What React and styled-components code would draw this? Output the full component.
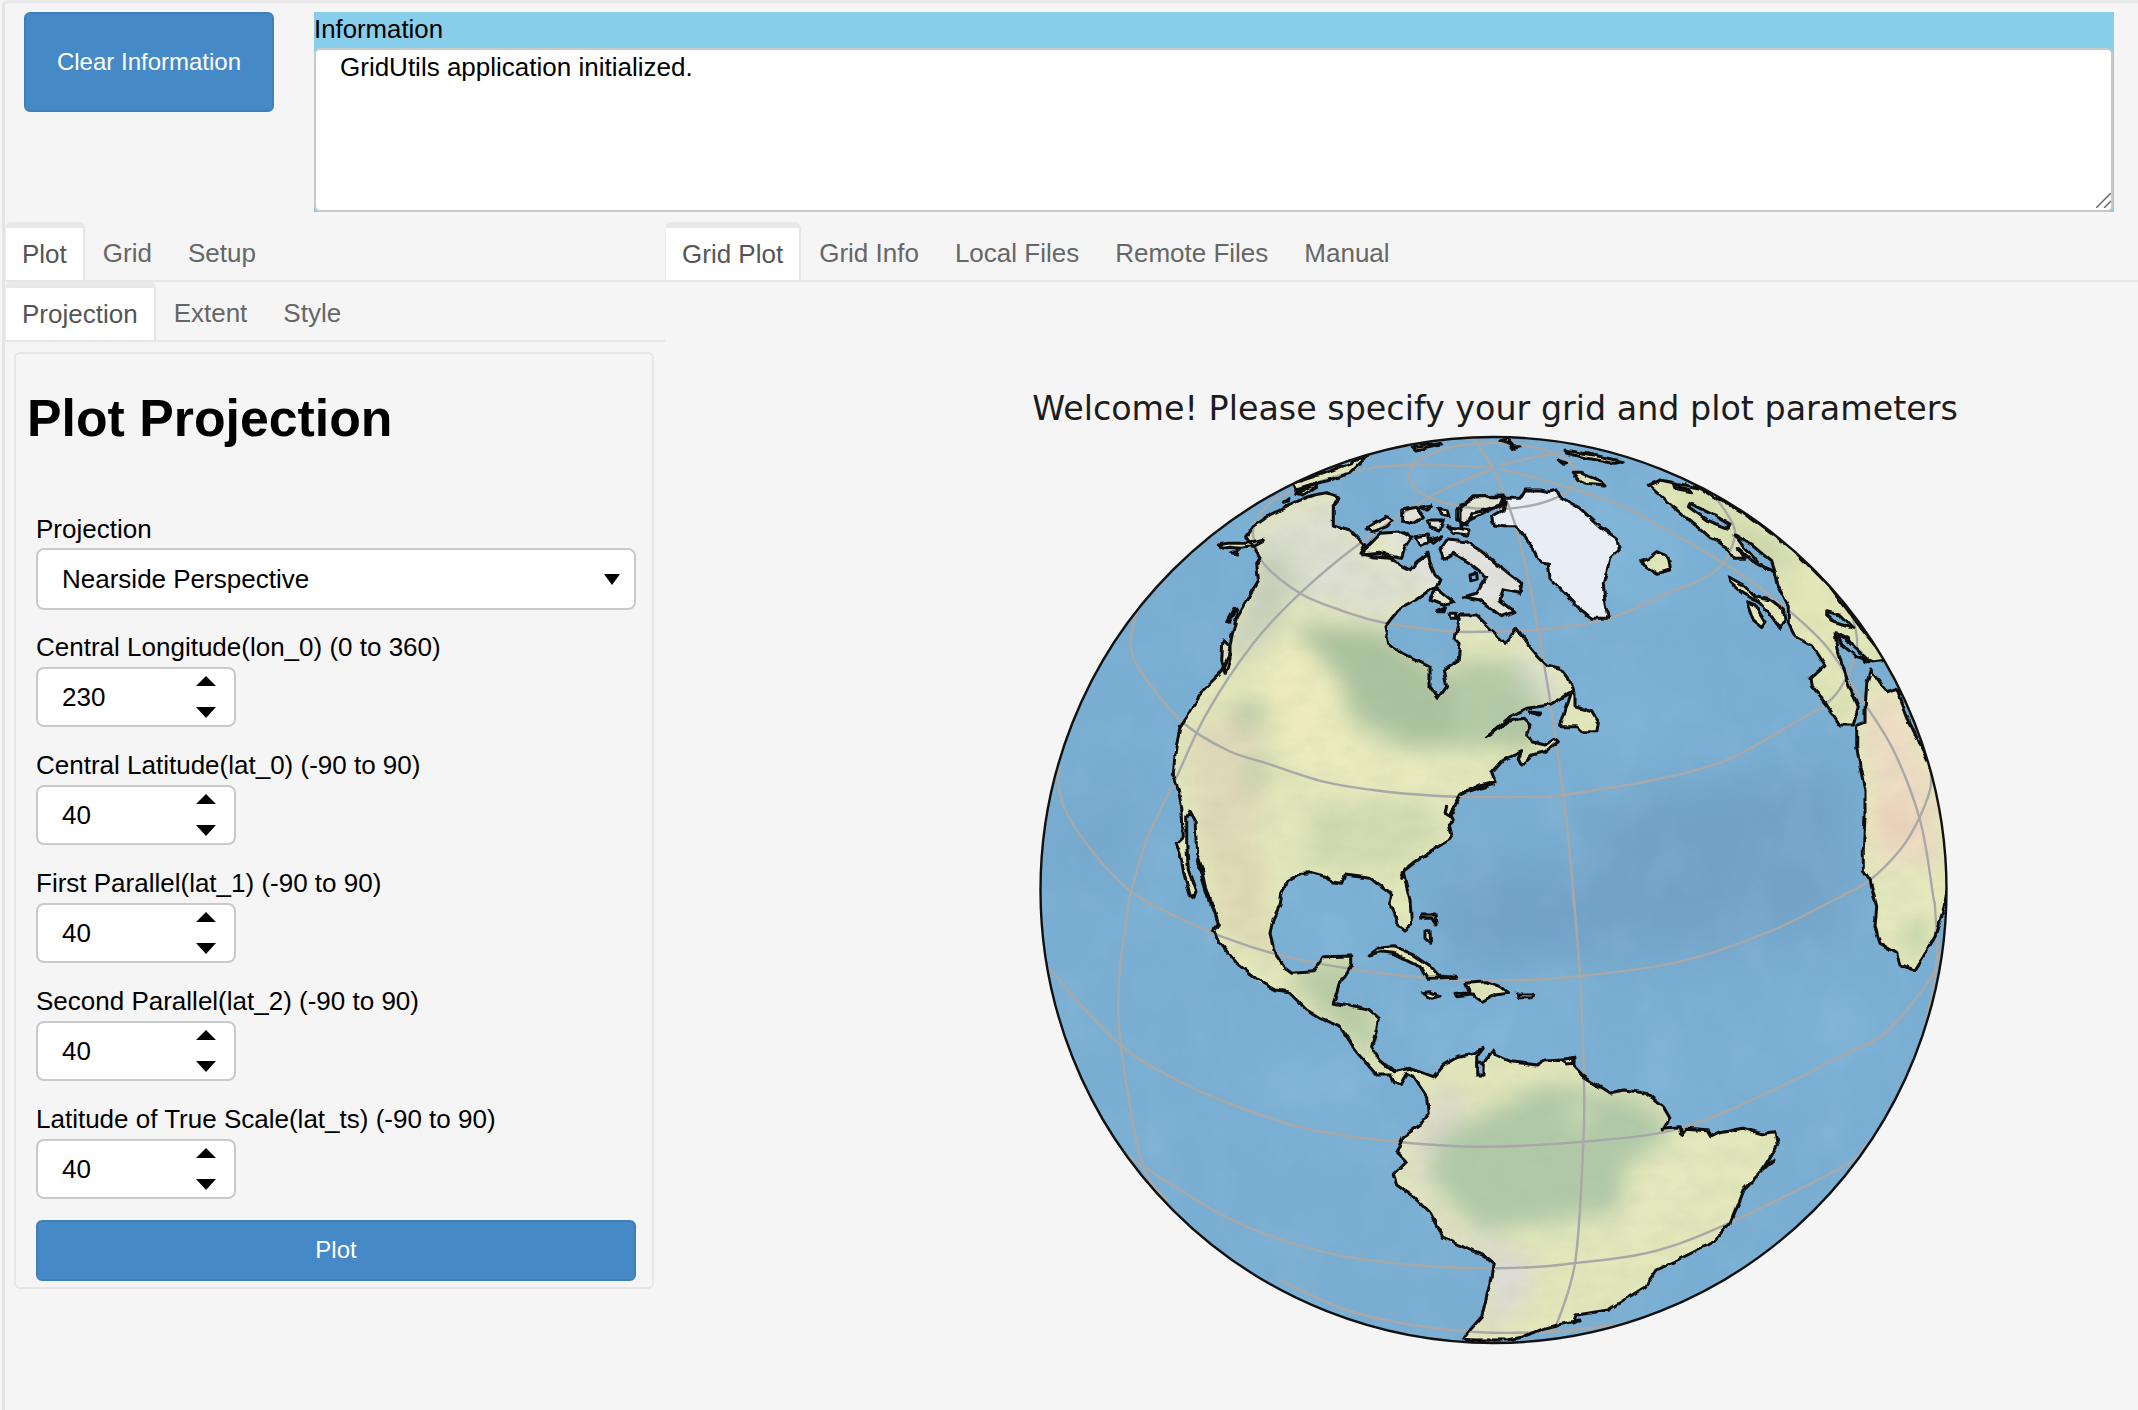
import React from "react";
import styled, { createGlobalStyle } from "styled-components";

const Global = createGlobalStyle`
  html, body { margin: 0; padding: 0; background: #f5f5f5; }
  body { font-family: "Liberation Sans", Arial, sans-serif; color: #000; }
  * { box-sizing: border-box; }
`;

const Frame = styled.div`
  width: 2136px; height: 1410px; margin-left: 2px; overflow: hidden;
  border-left: 3px solid #e4e4e4; border-top: 3px solid #e8e8e8;
  border-top-left-radius: 6px; background: #f5f5f5;
`;
const TopRow = styled.div`
  display: flex; align-items: flex-start; height: 219px; padding: 9px 0 0 19px;
`;
const Button = styled.button`
  display: block; width: ${p => p.$wide ? "600px" : "250px"}; height: ${p => p.$wide ? "61px" : "100px"};
  background: #4589c6; color: #fff; border: 2px solid #3f80bb; border-radius: 6px;
  font: 24px/1 "Liberation Sans", Arial, sans-serif; padding: 0 0 ${p => p.$wide ? "2px" : "0"};
`;
const InfoBox = styled.div`
  position: relative; margin-left: 40px; width: 1800px; height: 200px; background: #87ceeb;
  display: flex; flex-direction: column; padding-right: 1px;
`;
const InfoTitle = styled.div`
  height: 36px; font-size: 25.8px; line-height: 34px; color: #000;
`;
const InfoArea = styled.textarea`
  flex: 1; display: block; width: 100%; margin: 0; padding: 2px 24px; border: 2px solid #c9c9c9; border-radius: 6px;
  background: #fff; font: 26px/30px "Liberation Sans", Arial, sans-serif; color: #000; outline: none; resize: none;
`;
const Grip = styled.svg`
  position: absolute; right: 3px; bottom: 4px; width: 15px; height: 15px; pointer-events: none;
`;
const Columns = styled.div`display: flex; align-items: flex-start;`;
const LeftCol = styled.div`width: 660px; flex: none;`;
const RightCol = styled.div`flex: 1; min-width: 0;`;
const TabBar = styled.div`
  display: flex; height: 60px; border-bottom: 2px solid #e6e6e6; padding: 0;
`;
const Tab = styled.div`
  height: 58px; padding: 4px 17px 0; margin-right: 2px; flex: none;
  font-size: 26px; line-height: 54px; color: ${p => p.$active ? "#555" : "#666"};
  ${p => p.$active ? `
    background: #fff; border-top: 6px solid #e8e8e8; border-left: 1px solid #ececec; border-right: 2px solid #e6e6e6;
    border-radius: 6px 6px 0 0; line-height: 52px; padding-top: 0; padding-left: 16px; padding-right: 16px; margin-right: 1px;
  ` : ""}
`;
const Panel = styled.div`
  margin: 10px 0 0 9px; width: 640px; height: 937px; padding: 36px 18px 0 11px;
  border: 2px solid #e6e6e6; border-radius: 6px; background: #f5f5f5;
`;
const Heading = styled.h1`
  margin: 0 0 69px; font-size: 51.8px; line-height: 56px; font-weight: 700; color: #000;
`;
const Form = styled.div`padding-left: 9px;`;
const Group = styled.div`
  margin-bottom: 24px;
  &:last-of-type { margin-bottom: 21px; }
`;
const Label = styled.div`
  font-size: 26px; line-height: 28px; color: #000; white-space: nowrap;
`;
const SelectBox = styled.div`
  display: flex; align-items: center; justify-content: space-between; width: 600px; height: 62px;
  padding: 0 14px 0 24px; margin-top: 5px; margin-bottom: -1px; background: #fff; border: 2px solid #c9c9c9; border-radius: 8px;
  font-size: 26px;
`;
const NumberBox = styled.div`
  display: flex; align-items: center; justify-content: space-between; width: 200px; height: 60px;
  margin-top: 6px; padding: 0 18px 0 24px; background: #fff; border: 2px solid #c9c9c9; border-radius: 8px;
  font-size: 26px;
`;
const Pane = styled.div`
  padding: 107px 0 0 365px; display: flex; flex-direction: column; align-items: flex-start;
`;
const PlotTitle = styled.div`
  width: 930px; text-align: center; height: 41px;
  font: 33.35px/40px "DejaVu Sans", sans-serif; color: #1c1c1c; white-space: nowrap;
`;
const GlobeSvg = styled.svg`display: block; width: 930px; height: 930px; filter: blur(0.4px);`;

const conv = (ox, oy, k = 3, ky = k) => s =>
  s.trim().split(/\s+/).map(t => { const [x, y] = t.split(",").map(Number); return [ox + x / k, oy + y / ky]; });
const Z6 = conv(1040, 430), Z7 = conv(1460, 430), Z8 = conv(1180, 850), Z9 = conv(1640, 850), G = conv(0, 0, 1);
const poly = pts => "M" + pts.map(p => p[0].toFixed(1) + " " + p[1].toFixed(1)).join("L") + "Z";
const line = pts => "M" + pts.map(p => p[0].toFixed(1) + " " + p[1].toFixed(1)).join("L");
const smooth = pts => {
  let d = `M${pts[0][0].toFixed(1)} ${pts[0][1].toFixed(1)}`;
  for (let i = 0; i < pts.length - 1; i++) {
    const a = pts[Math.max(i - 1, 0)], b = pts[i], c = pts[i + 1], e = pts[Math.min(i + 2, pts.length - 1)];
    d += `C${(b[0] + (c[0] - a[0]) / 6).toFixed(1)} ${(b[1] + (c[1] - a[1]) / 6).toFixed(1)} ${(c[0] - (e[0] - b[0]) / 6).toFixed(1)} ${(c[1] - (e[1] - b[1]) / 6).toFixed(1)} ${c[0].toFixed(1)} ${c[1].toFixed(1)}`;
  }
  return d;
};

const mainland = poly([
  ...Z6("620,320 640,290 680,262 720,240 770,215 820,195 860,188 895,200 880,230 880,285 930,300 955,325 975,345 960,370 1000,380 1050,385 1090,410 1110,420 1130,395 1165,370 1170,400 1185,435 1200,450 1180,475 1130,510 1075,540 1035,590 1045,640 1090,670 1170,710 1170,770 1195,805 1220,770 1210,720 1255,690 1260,640 1245,625 1260,555 1310,555 1365,610 1395,640 1430,595 1470,650"),
  ...Z7("235,680 260,705 300,715 335,760 342,785 330,790 270,825 200,835 150,860 100,905 80,920 105,905 140,875 190,865 210,885 200,910 215,935 255,945 285,925 295,935 255,965 215,975 185,1005 175,985 185,965 130,990 95,1030 105,1055 60,1065 20,1085 0,1095"),
  ...Z6("1245,1120 1230,1150 1240,1170 1225,1185 1235,1225 1170,1265 1120,1300 1095,1320 1085,1345"),
  ...Z8("670,70 690,150 695,225 675,240 650,220 630,160 635,135 590,100 570,85 495,75 485,100 455,95 440,80 395,68 360,70 320,95 305,130 300,165 280,205 270,250 285,310 315,355 335,370 400,365 430,320 515,318 515,345 495,380 480,395 470,430 460,460 520,470 565,480 595,505 590,540 575,590 600,630 640,665 690,655 720,665 760,680 790,645 830,620 880,610 910,595 890,620 890,640 895,670 910,675 912,640 925,620 940,600 945,615 990,635 1070,645 1095,630 1180,625 1185,655 1210,680 1290,730 1330,720 1400,730 1450,770 1470,805 1450,840"),
  ...Z9("70,835 118,830 122,855 135,838 205,842 215,860 240,848 310,835 370,853 405,848 412,885 370,955"),
  ...G("1773,1160 1743,1190 1730,1223 1712,1243 1657,1270 1645,1287 1608,1310 1577,1315 1574,1323"),
  ...Z8("1200,1410 1090,1435 1030,1460 980,1470 890,1470 850,1468 870,1440 905,1400 915,1360 930,1300 940,1240 915,1220 860,1195 790,1165 750,1090 700,1040 650,1005 640,975 680,935 650,905 670,860 720,825 745,790 740,740 700,680 680,670 660,705 640,695 630,675 590,675 550,630 525,600 480,530 420,505 380,480 325,425 285,420 240,395 170,340 120,280 100,240 115,220 85,130 50,30"),
  ...Z6("510,1420 490,1330 470,1270 465,1170 450,1143 440,1160 440,1240 445,1320 468,1385 462,1405 450,1395 430,1320 420,1270 408,1240 430,1220 425,1130 415,1080 400,1035 405,970 420,890 440,860 490,780 540,730 565,680 575,620 590,560 620,510 655,450 650,400 660,385 640,350"),
]);

const greenland = poly([
  ...Z7("130,205 180,205 195,180 240,180 270,185 290,180 300,200 360,235 420,290 470,325 478,360 450,385 430,460 435,520 445,565 395,565 350,530 270,445 265,400 240,395 215,350 170,290 130,290 100,285 95,260 130,240 135,215"),
]);
const africa = poly([
  ...Z7("1190,890 1215,880 1215,840 1220,760 1232,720 1260,760 1280,785 1310,775 1350,880 1430,1050 1470,1300 1470,1430"),
  ...Z9("925,100 912,175 885,260 850,320 825,360 780,345 770,310 720,280 705,230 710,170 690,90 670,60 670,0"),
  ...Z7("1215,1160 1215,1080 1200,1010 1190,950"),
]);
const eurasia = poly(Z7("565,165 600,150 720,175 860,255 1000,360 1110,470 1200,590 1280,690 1240,695 1215,695 1165,625 1125,605 1130,650 1165,760 1195,830 1180,885 1140,885 1100,825 1055,770 1050,745 1095,705 1060,650 1005,620 985,580 985,530 955,470 945,425 880,395 835,355 855,385 820,385 800,350 750,325 700,280 620,215"));

const islands = [
  Z7("805,440 850,465 885,500 930,510 970,540 975,570 960,595 935,560 900,520 850,490 810,455"),
  Z7("860,515 885,525 915,575 905,590 880,570"),
  Z7("540,395 565,385 590,365 625,380 632,420 590,430 565,415"),
  Z7("340,130 365,130 425,155 435,165 375,160 355,150"),
  Z7("315,60 400,75 490,95 460,100 380,85 320,70"),
  Z7("298,90 320,98 310,100"),
  Z7("150,50 180,50 165,55"),
  Z7("335,785 345,790 345,830 395,845 415,880 410,905 365,905 350,890 300,890 320,830"),
  Z7("205,845 245,850 240,858 210,850"),
  Z7("0,225 50,200 130,198 125,225 70,250 30,270 0,290"),
  Z6("975,295 1040,260 1060,270 1040,290 1000,305"),
  Z6("985,345 1020,310 1090,305 1115,320 1095,350 1085,385 1060,380 1020,370 965,375"),
  Z6("1085,240 1130,232 1150,260 1120,280 1085,270"),
  Z6("1140,232 1175,225 1160,240"),
  Z6("1165,270 1210,270 1200,300 1170,290"),
  Z6("1195,235 1225,240 1230,260 1205,255"),
  Z6("1125,320 1165,315 1170,335 1140,350"),
  Z6("1170,330 1205,320 1180,340"),
  Z6("1220,290 1290,300 1285,315 1240,310"),
  Z6("1250,240 1300,200 1390,200 1380,225 1300,250 1280,285 1250,270"),
  Z6("1200,360 1220,330 1280,335 1320,360 1380,410 1445,460 1440,490 1390,480 1380,510 1425,545 1385,560 1320,510 1270,500 1310,490 1340,440 1290,400 1240,370 1210,385"),
  Z6("1170,510 1190,475 1240,515 1210,525"),
  Z6("1190,545 1220,532 1215,545"),
  Z6("1230,550 1250,550 1250,565 1232,565"),
  Z6("550,630 570,650 570,690 555,730 545,690 548,640"),
  Z6("560,575 585,535 590,540 570,572"),
  Z6("535,345 560,340 620,340 670,328 668,335 640,350 600,355 570,352 550,355"),
  Z6("575,368 595,362 590,372"),
  Z6("730,220 750,205 745,215"),
  Z6("770,190 820,165 830,170 790,195"),
  Z6("760,160 850,130 930,100 985,75 930,130 850,155 770,180"),
  Z6("1120,50 1200,38 1205,45 1130,60"),
  Z6("1380,30 1420,45 1400,25"),
  Z8("722,195 765,195 768,225 755,205 722,205"),
  Z8("735,245 750,245 752,280 735,265"),
  Z8("565,315 590,295 640,290 700,315 750,350 775,378 830,382 740,385 720,350 640,310 600,305"),
  Z8("725,428 750,425 780,438 755,445"),
  Z8("825,430 870,430 855,400 920,395 960,410 985,430 940,435 905,455 880,435 830,440"),
  Z8("1012,432 1058,432 1055,443 1015,443"),
  Z8("1145,630 1185,622 1185,640 1160,642"),
].map(poly);

const holes = [
  Z7("690,220 750,250 810,285 805,295 740,270 685,230"),
  Z7("825,315 875,345 935,395 945,425 900,405 870,370 850,350"),
  Z7("1100,545 1140,555 1180,595 1125,578 1100,555"),
  Z7("645,168 690,180 695,188 650,180"),
  Z6("1290,435 1310,430 1312,450 1292,455"),
  Z8("890,640 912,640 912,675 890,675"),
  Z7("1130,610 1170,640 1225,690 1235,695 1190,680 1140,640"),
].map(poly);

const allLand = [mainland, greenland, africa, eurasia, ...islands].join(" ");

const blobs = [
  ["#dddfd2", Z6("640,300 880,190 960,370 1190,450 1030,570 800,510 650,450")],
  ["#e3e3df", Z6("960,230 1500,190 1500,600 1240,560 1100,400")],
  ["#c9d0bc", Z6("650,330 780,400 730,560 600,700 560,650 640,440")],
  ["#abc29f", Z6("760,580 1030,600 1200,730 1500,770 1500,950 1300,950 1100,950 940,870 910,760 820,660")],
  ["#b6caa7", Z7("-20,680 180,700 290,800 200,860 50,950 -20,950")],
  ["#d9decf", Z7("170,640 270,720 335,770 270,810 190,760")],
  ["#ecebbd", Z6("710,630 850,700 900,900 1000,990 1280,1050 1150,1080 800,1030 640,800")],
  ["#e0d9b8", Z6("440,900 640,830 680,1100 600,1300 480,1250")],
  ["#bfcdaa", Z6("600,1040 680,960 690,1040 640,1100")],
  ["#c0cca9", Z6("560,820 660,800 700,890 600,900")],
  ["#d2dcb0", Z6("800,1130 1150,1110 1230,1200 1090,1310 800,1320")],
  ["#e3dfba", Z6("500,1300 700,1320 640,1500 540,1500")],
  ["#dfdab3", Z8("80,0 270,0 260,250 275,340 150,270")],
  ["#b8cba6", Z8("320,360 520,320 590,500 600,650 400,470")],
  ["#b1c9a8", Z8("830,830 1100,700 1400,750 1480,850 1320,960 1340,1080 1100,1120 900,1140 760,1000 750,890")],
  ["#e2e5ba", Z8("820,660 1180,640 1060,720 840,800")],
  ["#e4e7bc", Z8("1170,780 1230,780 1220,830 1180,830")],
  ["#d9d8ca", Z8("770,720 880,740 800,860 730,910 730,1010 830,1130 960,1170 1070,1240 1050,1340 960,1420 900,1460 920,1350 930,1240 800,1150 690,1000 690,880")],
  ["#dfdddc", Z8("950,1240 1040,1250 1010,1340 950,1380")],
  ["#e6e8be", Z8("1300,1100 1500,900 1560,1000 1300,1200")],
  ["#eeddc4", Z7("1205,800 1310,790 1420,1050 1450,1300 1240,1300")],
  ["#eaceb6", Z7("1260,1130 1370,1130 1350,1240 1270,1220")],
  ["#e6e8bd", Z7("1230,1360 1460,1340 1460,1520 1250,1520")],
  ["#bcd0a8", Z9("790,230 880,200 850,290 810,320")],
  ["#d6dfaf", Z7("560,150 720,175 1000,360 1000,450 800,330")],
  ["#bbcca5", Z7("800,260 1010,410 1130,530 1050,560 950,420")],
  ["#e3e7b8", Z7("950,400 1130,480 1180,590 1100,680 990,560")],
  ["#dae2b0", Z7("1060,700 1160,780 1180,880 1110,830")],
];

const oceanLight = [
  ["#80b6da", Z8("300,110 620,170 560,290 300,280")],
  ["#7fb5d9", Z8("620,470 1150,480 1150,590 760,640")],
  ["#7fb4d8", Z8("160,560 480,620 640,860 300,800")],
  ["#80b6da", Z7("380,760 620,760 620,960 330,960")],
  ["#7fb5d9", Z7("180,100 560,230 760,420 450,520")],
  ["#7fb4d8", Z9("0,640 260,660 140,800 0,740")],
  ["#7fb4d7", Z9("420,480 760,480 620,640 380,620")],
];
const oceanDark = [
  ["#6f9fc4", Z7("370,1130 1150,1020 1150,1240 420,1300")],
  ["#71a1c6", Z8("800,50 1480,50 1480,300 800,340")],
  ["#72a0c5", Z9("100,30 640,30 620,220 80,300")],
  ["#74a7cc", Z6("20,1200 280,1000 280,1300 40,1400")],
];

const graticule = [
  Z6("645,270 640,320 670,400 780,490 900,540 1040,580 1250,605 1500,600").concat(Z7("230,600 440,568 620,490 720,450 790,400 825,310 800,250 760,195")),
  Z6("290,545 272,640 300,720 420,870 560,960 680,1000 850,1055 1040,1085 1250,1100 1500,1100").concat(Z7("310,1095 580,1050 800,990 1000,880 1100,820 1150,760 1190,660 1180,570 1150,520")),
  Z6("60,1010 55,1060 80,1150 170,1280 280,1390").concat(Z8("0,205 100,250 280,310 500,355 750,385 950,392 1200,378 1500,335")).concat(Z9("400,240 600,140 690,90 780,0")).concat(Z7("1370,1180 1410,1080 1412,1020")),
  G("1044,963 1118,1043").concat(Z8("0,695 200,780 400,840 650,875 900,890 1210,875 1500,835")).concat(Z9("400,720 600,620 720,560 800,480 880,370 915,250")),
  G("1090,1130").concat(Z8("0,1020 200,1130 450,1210 700,1245 950,1255 1180,1240 1500,1180")).concat(Z9("590,960 680,880")),
  Z8("300,1290 500,1380 700,1425 900,1447 1100,1445 1300,1425 1500,1380").concat(G("1693,1310 1750,1265")),
  Z7("100,115 170,300 235,600 310,1090 350,1500").concat(Z8("1180,130 1200,380 1212,700 1210,880 1185,1240 1120,1450")),
  Z6("1360,115 1170,200 960,340 780,490 640,640 500,850 410,1040 320,1230 270,1400 255,1500").concat(G("1119,980 1121,1047 1142,1163 1167,1200")),
  Z6("1360,112 1110,105 940,125 720,200 650,265"),
  Z7("125,118 300,165 480,225 620,300 800,405 960,520 1100,650 1200,800 1300,960 1380,1170 1420,1400").concat(Z9("885,170 890,340 860,510")),
  Z7("120,105 240,78 300,70"),
  Z7("100,115 40,25"),
];

const Globe = () => (
  <GlobeSvg viewBox="1030 430 930 930" aria-hidden="true">
    <defs>
      <clipPath id="disc"><circle cx="1493.5" cy="890" r="453" /></clipPath>
      <clipPath id="land"><path d={allLand} /></clipPath>
      <filter id="b1" x="-30%" y="-30%" width="160%" height="160%"><feGaussianBlur stdDeviation="11" /></filter>
      <filter id="b2" x="-30%" y="-30%" width="160%" height="160%"><feGaussianBlur stdDeviation="28" /></filter>
      <filter id="rough" x="-5%" y="-5%" width="110%" height="110%">
        <feTurbulence type="fractalNoise" baseFrequency="0.09" numOctaves="2" seed="4" result="n" />
        <feDisplacementMap in="SourceGraphic" in2="n" scale="5" xChannelSelector="R" yChannelSelector="G" />
      </filter>
      <filter id="mottle" x="0" y="0" width="100%" height="100%">
        <feTurbulence type="fractalNoise" baseFrequency="0.035 0.06" numOctaves="3" seed="9" />
        <feColorMatrix values="0 0 0 0 0.4  0 0 0 0 0.5  0 0 0 0 0.33  1.6 0 0 0 -0.62" />
      </filter>
      <filter id="mottleSea" x="0" y="0" width="100%" height="100%">
        <feTurbulence type="fractalNoise" baseFrequency="0.022 0.018" numOctaves="3" seed="3" />
        <feColorMatrix values="0 0 0 0 0.62  0 0 0 0 0.8  0 0 0 0 0.92  1.5 0 0 0 -0.6" />
      </filter>
    </defs>
    <g clipPath="url(#disc)">
      <rect x="1030" y="430" width="930" height="930" fill="#79aed2" />
      <g filter="url(#b2)">
        {oceanDark.map(([c, p], i) => <path key={i} d={poly(p)} fill={c} />)}
        {oceanLight.map(([c, p], i) => <path key={i} d={poly(p)} fill={c} />)}
      </g>
      <rect x="1030" y="430" width="930" height="930" filter="url(#mottleSea)" opacity="0.12" />
      <g clipPath="url(#land)">
        <rect x="1030" y="430" width="930" height="930" fill="#e3e7bb" />
        <g filter="url(#b1)">
          {blobs.map(([c, p], i) => <path key={i} d={poly(p)} fill={c} />)}
        </g>
        <rect x="1030" y="430" width="930" height="930" filter="url(#mottle)" opacity="0.18" />
        <path d={greenland} fill="#e9edf4" />
      </g>
      <g fill="none" stroke="#a8a8a8" strokeWidth="2.4">
        {graticule.map((g, i) => <path key={i} d={smooth(g)} />)}
        <ellipse cx="1493" cy="476" rx="84" ry="33" />
      </g>
      <g fill="none" stroke="#0a0a0a" strokeWidth="3" strokeLinejoin="round" filter="url(#rough)">
        <path d={allLand} />
        {holes.map((h, i) => <path key={i} d={h} fill="#79aed2" />)}
        <path d={line(Z6("1285,1083 1360,1060"))} strokeWidth="5" />
        <path d={line(Z6("1220,1125 1215,1150 1232,1160 1250,1115"))} />
      </g>
    </g>
    <circle cx="1493.5" cy="890" r="453" fill="none" stroke="#111" strokeWidth="2.4" />
  </GlobeSvg>
);

const Spinner = () => (
  <svg width="20" height="42" viewBox="0 0 20 42" aria-hidden="true">
    <path d="M10 0 20 10H0Z M0 31H20L10 42Z" fill="#000" />
  </svg>
);
const Caret = () => (
  <svg width="16" height="11" viewBox="0 0 16 11" aria-hidden="true"><path d="M0 0H16L8 11Z" fill="#000" /></svg>
);

const fields = [
  ["Central Longitude(lon_0) (0 to 360)", "230"],
  ["Central Latitude(lat_0) (-90 to 90)", "40"],
  ["First Parallel(lat_1) (-90 to 90)", "40"],
  ["Second Parallel(lat_2) (-90 to 90)", "40"],
  ["Latitude of True Scale(lat_ts) (-90 to 90)", "40"],
];

export default function App() {
  return (
    <Frame>
      <Global />
      <TopRow>
        <Button>Clear Information</Button>
        <InfoBox>
          <InfoTitle>Information</InfoTitle>
          <InfoArea readOnly defaultValue="GridUtils application initialized." />
          <Grip viewBox="0 0 15 15" aria-hidden="true">
            <path d="M0 15 15 0M8 15 15 8" stroke="#666" strokeWidth="1.5" fill="none" />
          </Grip>
        </InfoBox>
      </TopRow>
      <Columns>
        <LeftCol>
          <TabBar>
            <Tab $active>Plot</Tab><Tab>Grid</Tab><Tab>Setup</Tab>
          </TabBar>
          <TabBar>
            <Tab $active>Projection</Tab><Tab>Extent</Tab><Tab>Style</Tab>
          </TabBar>
          <Panel>
            <Heading>Plot Projection</Heading>
            <Form>
              <Group>
                <Label>Projection</Label>
                <SelectBox>Nearside Perspective<Caret /></SelectBox>
              </Group>
              {fields.map(([label, value]) => (
                <Group key={label}>
                  <Label>{label}</Label>
                  <NumberBox>{value}<Spinner /></NumberBox>
                </Group>
              ))}
              <Button $wide>Plot</Button>
            </Form>
          </Panel>
        </LeftCol>
        <RightCol>
          <TabBar>
            <Tab $active>Grid Plot</Tab><Tab>Grid Info</Tab><Tab>Local Files</Tab><Tab>Remote Files</Tab><Tab>Manual</Tab>
          </TabBar>
          <Pane>
            <PlotTitle>Welcome! Please specify your grid and plot parameters</PlotTitle>
            <Globe />
          </Pane>
        </RightCol>
      </Columns>
    </Frame>
  );
}
